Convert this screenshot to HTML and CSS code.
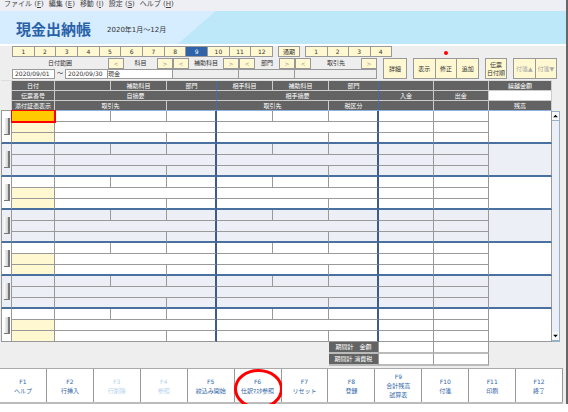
FILE: index.html
```html
<!DOCTYPE html>
<html lang="ja">
<head>
    <meta charset="UTF-8">
    <meta name="viewport" content="width=device-width, initial-scale=1.0">
    <title>現金出納帳</title>
    <link rel="stylesheet" href="styles.css">
</head>
<body>
    <div class="window">
        <nav class="menu">
            <a href="#">ファイル (<u>F</u>)</a>
            <a href="#">編集 (<u>E</u>)</a>
            <a href="#">移動 (<u>I</u>)</a>
            <a href="#">設定 (<u>S</u>)</a>
            <a href="#">ヘルプ (<u>H</u>)</a>
        </nav>
        <header class="title">
            <h1>現金出納帳</h1>
            <span>2020年1月～12月</span>
        </header>
        <main>
            <div class="months">
                <div class="month-group year">
                    <button>1</button><button>2</button><button>3</button><button>4</button><button>5</button><button>6</button><button>7</button><button>8</button><button class="current">9</button><button>10</button><button>11</button><button>12</button>
                </div>
                <div class="month-group all"><button>通期</button></div>
                <div class="month-group next">
                    <button>1</button><button>2</button><button>3</button><button>4</button>
                </div>
                <span class="marker"></span>
            </div>
            <div class="toolbar">
                <div class="filters">
                    <label class="range" for="from">日付範囲</label>
                    <div class="picker"><button>&lt;</button><label for="account">科目</label><button>&gt;</button></div>
                    <div class="picker"><button>&lt;</button><label for="sub">補助科目</label><button>&gt;</button></div>
                    <div class="picker"><button>&lt;</button><label for="dept">部門</label><button>&gt;</button></div>
                    <div class="picker"><button>&lt;</button><label for="partner">取引先</label><button>&gt;</button></div>
                    <input type="text" id="from" value="2020/09/01">
                    <span class="tilde">～</span>
                    <input type="text" id="to" value="2020/09/30" aria-label="日付範囲 終了">
                    <input type="text" id="account" class="account" value="現金">
                    <input type="text" id="sub" class="empty">
                    <input type="text" id="dept" class="empty">
                    <input type="text" id="partner" class="empty">
                </div>
                <div class="tools detail"><button>詳細</button></div>
                <div class="tools edit"><button>表示</button><button>修正</button><button>追加</button></div>
                <div class="tools order"><button>伝票<br>日付順</button></div>
                <div class="tools tags"><button disabled>付箋▲</button><button disabled>付箋▼</button></div>
            </div>
            <div class="ledger">
                <table>
                    <colgroup>
                        <col class="c-handle"><col class="c-date"><col class="c-item"><col class="c-item"><col class="c-dept"><col class="c-item"><col class="c-item"><col class="c-dept"><col class="c-money"><col class="c-money"><col>
                    </colgroup>
                    <thead>
                        <tr>
                            <td rowspan="3" class="blank"></td>
                            <th>日付</th><th></th><th>補助科目</th><th class="split">部門</th>
                            <th>相手科目</th><th>補助科目</th><th class="split">部門</th><th></th><th></th><th>繰越金額</th>
                        </tr>
                        <tr>
                            <th>伝票番号</th><th colspan="3" class="split">自摘要</th><th colspan="3" class="split">相手摘要</th>
                            <th>入金</th><th>出金</th><td class="carry"></td>
                        </tr>
                        <tr>
                            <th>添付証憑表示</th><th colspan="2">取引先</th><th class="split"></th>
                            <th colspan="2">取引先</th><th class="split">税区分</th><th></th><th></th><th>残高</th>
                        </tr>
                    </thead>
                    <tbody id="rows"></tbody>
                    <tfoot>
                        <tr>
                            <td colspan="7" class="blank"></td><th>期間計　金額</th><td></td><td></td><td class="blank"></td>
                        </tr>
                        <tr>
                            <td colspan="7" class="blank"></td><th>期間計 消費税</th><td></td><td></td><td class="blank"></td>
                        </tr>
                    </tfoot>
                </table>
                <div class="scrollbar">
                    <button aria-label="上へ"><svg viewBox="0 0 6 6"><path d="M1 4L3 2L5 4Z"/></svg></button>
                    <button aria-label="下へ"><svg viewBox="0 0 6 6"><path d="M1 2L3 4L5 2Z"/></svg></button>
                </div>
            </div>
        </main>
        <footer class="keys">
            <button>F1<br>ヘルプ</button>
            <button>F2<br>行挿入</button>
            <button disabled>F3<br>行削除</button>
            <button disabled>F4<br>参照</button>
            <button>F5<br>絞込み開始</button>
            <button class="circled">F6<br>仕訳ﾏｽﾀ参照</button>
            <button>F7<br>リセット</button>
            <button>F8<br>登録</button>
            <button>F9<br>合計残高<br>試算表</button>
            <button>F10<br>付箋</button>
            <button>F11<br>印刷</button>
            <button>F12<br>終了</button>
        </footer>
    </div>
    <script>
        const rows = document.getElementById('rows');
        let html = '';

        // one slip = three lines
        for (let i = 0; i < 7; i++) {
            const type = i % 2 ? 'even' : 'odd';
            const first = i === 0 ? 'date selected' : 'date';
            html += `
                <tr class="${type}">
                    <td rowspan="3" class="handle"><span></span></td>
                    <td class="${first}"></td><td></td><td></td><td class="split"></td>
                    <td></td><td></td><td class="split"></td><td></td><td></td>
                    <td rowspan="3" class="balance"></td>
                </tr>
                <tr class="${type}">
                    <td class="entry"></td><td colspan="3" class="split"></td><td colspan="3" class="split"></td><td></td><td></td>
                </tr>
                <tr class="${type} last">
                    <td class="entry"></td><td colspan="2"></td><td class="split"></td>
                    <td colspan="2"></td><td class="split"></td><td></td><td></td>
                </tr>`;
        }

        rows.innerHTML = html;
    </script>
</body>
</html>
```
FILE: styles.css
```css
* {
    box-sizing: border-box;
}

body {
    margin: 0;
    background: #fff;
    color: #333;
    font-family: "DejaVu Sans", "Noto Sans CJK JP", sans-serif;
    font-size: 6px;
    line-height: 8px;
}

button,
input {
    margin: 0;
    padding: 0;
    min-width: 0;
    border: 1px solid #999;
    border-radius: 0;
    color: #333;
    font: inherit;
}

button {
    background: #fff8d0;
}

.window {
    background: #eee;
    border-right: 2px solid #666;
}

.menu {
    display: flex;
    gap: 5px;
    height: 11px;
    padding-left: 4px;
    background: #eeeff4;
    font-size: 7px;
}

.menu a {
    color: #444;
    text-decoration: none;
    white-space: nowrap;
}

.title {
    display: flex;
    align-items: center;
    gap: 16px;
    height: 33px;
    padding: 5px 0 0 16px;
    background: linear-gradient(139deg, #d6ecff 141px, #bde8f9 142px);
}

.title h1 {
    margin: 0;
    color: #2a62a8;
    font-size: 15px;
    line-height: 20px;
}

.title span {
    font-size: 7px;
}

main {
    padding: 0 6px 2px 1px;
    border-top: 2px solid #fff;
}

.months {
    position: relative;
    display: flex;
    gap: 5px;
    padding-left: 11px;
}

.month-group {
    display: flex;
    height: 11px;
}

.month-group button {
    flex: 1;
    line-height: 8px;
}

.month-group button + button,
.tools button + button {
    border-left: 0;
}

.month-group .current {
    background: #2f65a8;
    color: #fff;
}

.year {
    flex: 261;
}

.all {
    flex: 22;
}

.next {
    flex: 87;
    margin-right: 168px;
}

/* red dot over the edit button */
.marker {
    position: absolute;
    top: 5px;
    right: 112px;
    width: 4px;
    height: 4px;
    border-radius: 50%;
    background: #f00;
}

.toolbar {
    display: flex;
    gap: 6px;
    margin-top: 1px;
    padding: 0 3px 0 11px;
}

.filters {
    flex: 365;
    display: grid;
    grid-template-columns: 43fr 10fr 43fr 65fr 66fr 56fr 82fr;
    grid-template-rows: 11px 10px;
}

.range {
    grid-column: span 3;
    padding-top: 1px;
    text-align: center;
}

.filters input {
    width: 100%;
    padding-left: 2px;
    background: #fff;
}

.filters .account {
    padding-left: 0;
    border-left-width: 0;
}

.filters .empty {
    border-left: 0;
    background: #eee;
}

.tilde {
    text-align: center;
}

.picker {
    display: flex;
}

.picker button {
    width: 16px;
    color: #999;
    line-height: 8px;
}

.picker label {
    flex: 1;
    padding-top: 1px;
    text-align: center;
    white-space: nowrap;
}

.tools {
    display: flex;
}

.tools button {
    flex: 1;
    white-space: nowrap;
}

.tools button:disabled {
    color: #aaa;
}

.detail {
    flex: 24;
}

.edit {
    flex: 66;
}

.order {
    flex: 22;
}

.tags {
    flex: 44;
}

.ledger {
    display: flex;
    margin-top: 1px;
}

table {
    flex: 1;
    width: 100%;
    table-layout: fixed;
    border-spacing: 0;
    border-top: 1px solid #ddd;
}

.c-handle {
    width: 2%;
}

.c-date {
    width: 7.8%;
}

.c-item {
    width: 10.16%;
}

.c-dept {
    width: 9.08%;
}

.c-money {
    width: 9.98%;
}

th,
td {
    height: 11px;
    padding: 0;
    border-right: 1px solid #999;
    border-bottom: 1px solid #999;
    line-height: 8px;
    white-space: nowrap;
}

th {
    background: #636363;
    color: #fff;
    font-weight: normal;
}

td {
    background: #fff;
}

thead th,
thead td {
    height: 10px;
    border-color: #ccc;
}

thead tr:last-child th {
    border-bottom-color: #8fb0dc;
}

thead .split {
    border-right-color: #3f6bb0;
}

thead .blank,
tfoot .blank {
    background: none;
    border-color: transparent;
}

thead .blank {
    border-right-color: #ccc;
    border-bottom-color: #999;
}

tbody .split {
    border-right: 2px solid #3f5a8c;
}

tbody .even td {
    background: #edeff6;
}

tbody .last td,
tbody .handle,
tbody .balance {
    border-bottom: 2px solid #4a709f;
}

tbody .last:last-child td,
tbody tr:nth-last-child(3) .handle,
tbody tr:nth-last-child(3) .balance {
    border-bottom: 1px solid #999;
}

tbody .handle {
    border-left: 1px solid #999;
}

.handle span {
    display: block;
    width: 6px;
    height: 17px;
    margin: 0 auto;
    border-right: 2px solid #777;
    border-bottom: 1px solid #777;
    background: linear-gradient(90deg, #fff, #ccc);
}

tbody .odd .entry {
    background: #fff8d0;
}

tbody .odd .selected {
    border-color: #f00;
    background: #ffcb00;
    outline: 1px solid #f00;
}

tfoot th,
tfoot td {
    height: 12px;
    border-bottom-width: 2px;
    border-bottom-color: #bbb;
}

.scrollbar {
    display: flex;
    flex-direction: column;
    justify-content: space-between;
    width: 8px;
    margin: 31px 0 24px;
    border: 1px solid #9ab0c4;
    border-left: 0;
    background: #edeff6;
}

.scrollbar button {
    display: flex;
    height: 9px;
    border: 0;
    border-bottom: 1px solid #9ab0c4;
    background: #f8f8f8;
}

.scrollbar svg {
    width: 7px;
    height: 8px;
}

.keys {
    display: flex;
    margin-right: 3px;
    border-top: 1px solid #aaa;
    border-bottom: 2px solid #bbb;
}

.keys button {
    position: relative;
    flex: 1;
    height: 33px;
    border: 0;
    border-right: 1px solid #999;
    background: #fff;
    color: #2f65a8;
    line-height: 9px;
    white-space: nowrap;
}

.keys button:disabled {
    color: #b5d3ee;
}

.circled::after {
    content: "";
    position: absolute;
    inset: 0 -2px -7px -1px;
    border: 3px solid #f00;
    border-radius: 50%;
}
```
